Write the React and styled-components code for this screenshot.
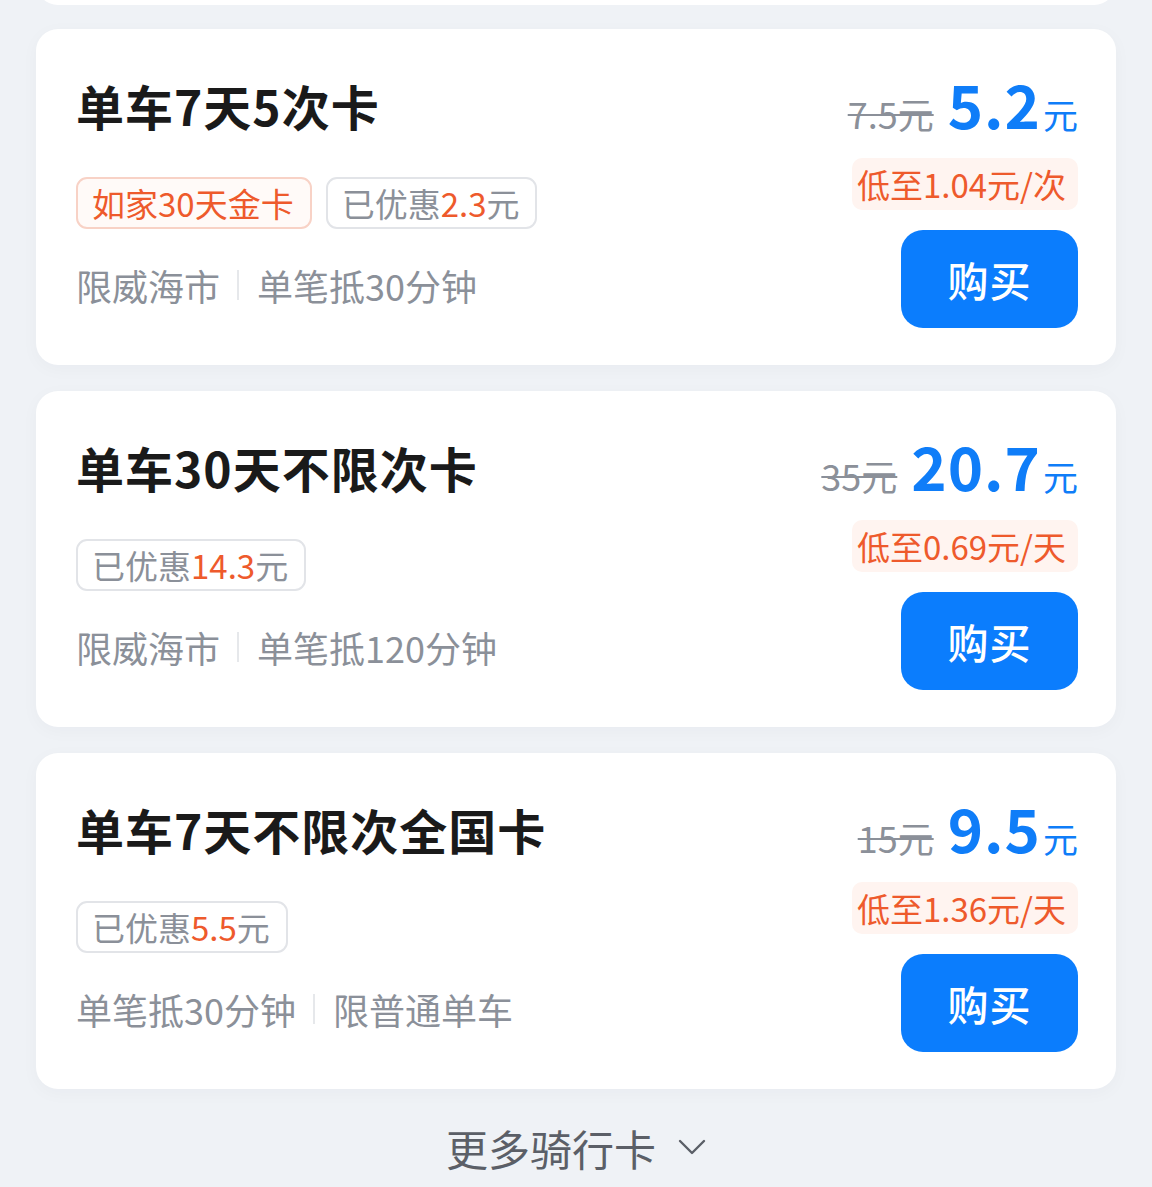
import React from 'react';
import styled, { createGlobalStyle } from 'styled-components';

const GlobalStyle = createGlobalStyle`
  html, body {
    margin: 0;
    padding: 0;
    background: #eff2f6;
  }
  body {
    font-family: "Noto Sans CJK SC", "Noto Sans", sans-serif;
    -webkit-font-smoothing: antialiased;
  }
`;

const Page = styled.div`
  width: 1152px;
  padding: 0 36px;
  box-sizing: border-box;
`;

const PrevCardTail = styled.div`
  height: 5px;
  overflow: hidden;
  display: flex;
  align-items: flex-end;
  margin-bottom: 24px;

  &::before {
    content: '';
    flex: 1;
    height: 44px;
    background: #fff;
    border-radius: 22px;
  }
`;

const CardList = styled.div`
  display: flex;
  flex-direction: column;
  gap: 26px;
`;

const Card = styled.div`
  box-sizing: border-box;
  height: 336px;
  background: #fff;
  border-radius: 22px;
  padding: 46px 38px 0 40px;
  display: grid;
  grid-template-columns: 1fr auto;
  align-items: start;
  box-shadow: 0 4px 18px rgba(30, 40, 60, 0.03);
`;

const Info = styled.div`
  display: flex;
  flex-direction: column;
  align-items: flex-start;
`;

const Title = styled.h2`
  margin: 0;
  font-size: 48px;
  line-height: 60px;
  font-weight: 700;
  color: #1a1a1a;
  letter-spacing: 1px;
`;

const Tags = styled.div`
  display: flex;
  gap: 14px;
  margin-top: 42px;
`;

const Tag = styled.span`
  height: 52px;
  box-sizing: border-box;
  display: inline-flex;
  align-items: center;
  padding: 0 16px 0 14px;
  border-radius: 11px;
  font-size: 33px;
  border: 2px solid ${p => (p.$hot ? '#f8d2c6' : '#e2e4e8')};
  background: ${p => (p.$hot ? '#fffaf8' : '#fff')};
  color: ${p => (p.$hot ? '#ee5a2c' : '#8b9099')};
`;

const Hot = styled.span`
  color: #ee5a2c;
`;

const Meta = styled.div`
  display: flex;
  align-items: center;
  margin-top: 34px;
  height: 44px;
  font-size: 36px;
  color: #8b9099;
`;

const Divider = styled.i`
  width: 2px;
  height: 30px;
  background: #e6e8eb;
  margin: 0 18px 0 17px;
`;

const PriceCol = styled.div`
  display: flex;
  flex-direction: column;
  align-items: flex-end;
`;

const PriceRow = styled.div`
  display: flex;
  align-items: baseline;
  height: 56px;
  line-height: 56px;
`;

const OldPrice = styled.s`
  font-size: 36px;
  color: #8b9099;
  margin-right: 14px;
  text-decoration-thickness: 2px;
`;

const Price = styled.span`
  font-size: 60px;
  font-weight: 700;
  color: #0f7df8;
  letter-spacing: 1px;
`;

const Unit = styled.span`
  font-size: 35px;
  color: #0f7df8;
  margin-left: 2px;
`;

const Lowest = styled.div`
  margin-top: 27px;
  height: 52px;
  display: flex;
  align-items: center;
  padding: 0 12px 0 5px;
  border-radius: 10px;
  background: #fff4f0;
  font-size: 33px;
  color: #ee5a2c;
`;

const BuyButton = styled.button`
  margin-top: 20px;
  width: 177px;
  height: 98px;
  border: none;
  border-radius: 22px;
  background: #0b7dfd;
  color: #fff;
  font-family: inherit;
  font-size: 41px;
  font-weight: 500;
  letter-spacing: 1px;
  cursor: pointer;
`;

const More = styled.div`
  display: flex;
  justify-content: center;
  align-items: center;
  gap: 22px;
  padding: 34px 0 16px;
  height: 48px;
  font-size: 42px;
  color: #5b5f67;
`;

const Chevron = () => (
  <svg width="28" height="16" viewBox="0 0 28 16" fill="none">
    <path d="M2 2 L14 14 L26 2" stroke="#5b5f67" strokeWidth="2.4" strokeLinecap="round" strokeLinejoin="round" />
  </svg>
);

const cards = [
  {
    title: '单车7天5次卡',
    badge: '如家30天金卡',
    saved: '2.3',
    meta: ['限威海市', '单笔抵30分钟'],
    old: '7.5元',
    price: '5.2',
    lowest: '低至1.04元/次',
  },
  {
    title: '单车30天不限次卡',
    saved: '14.3',
    meta: ['限威海市', '单笔抵120分钟'],
    old: '35元',
    price: '20.7',
    lowest: '低至0.69元/天',
  },
  {
    title: '单车7天不限次全国卡',
    saved: '5.5',
    meta: ['单笔抵30分钟', '限普通单车'],
    old: '15元',
    price: '9.5',
    lowest: '低至1.36元/天',
  },
];

const App = () => (
  <Page>
    <GlobalStyle />
    <PrevCardTail />
    <CardList>
      {cards.map(c => (
        <Card key={c.title}>
          <Info>
            <Title>{c.title}</Title>
            <Tags>
              {c.badge && <Tag $hot>{c.badge}</Tag>}
              <Tag>
                已优惠<Hot>{c.saved}</Hot>元
              </Tag>
            </Tags>
            <Meta>
              <span>{c.meta[0]}</span>
              <Divider />
              <span>{c.meta[1]}</span>
            </Meta>
          </Info>
          <PriceCol>
            <PriceRow>
              <OldPrice>{c.old}</OldPrice>
              <Price>{c.price}</Price>
              <Unit>元</Unit>
            </PriceRow>
            <Lowest>{c.lowest}</Lowest>
            <BuyButton>购买</BuyButton>
          </PriceCol>
        </Card>
      ))}
    </CardList>
    <More>
      更多骑行卡
      <Chevron />
    </More>
  </Page>
);

export default App;
